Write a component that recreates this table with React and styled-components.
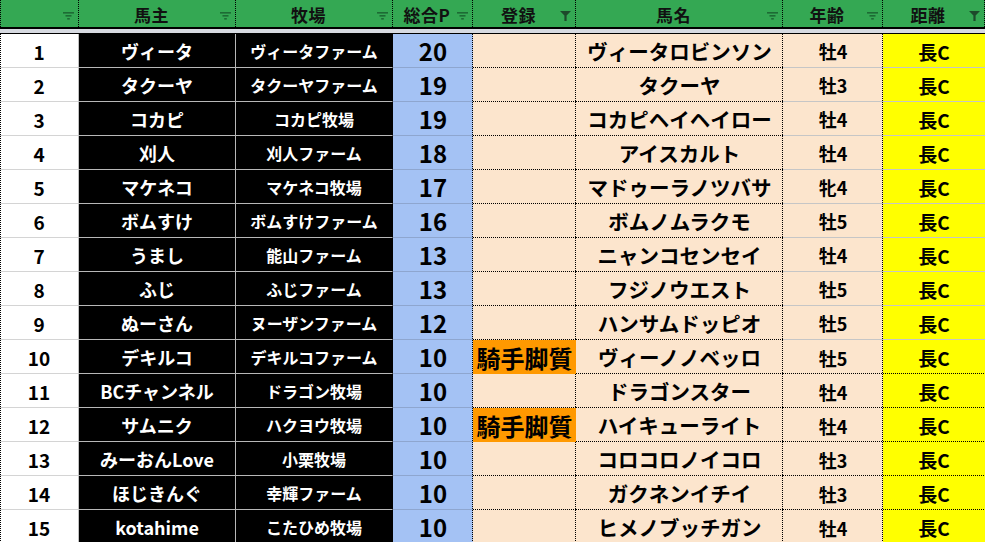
import React from 'react';
import styled, { createGlobalStyle } from 'styled-components';

const GlobalStyle = createGlobalStyle`
  html, body {
    margin: 0;
    padding: 0;
    background: #ffffff;
    overflow: hidden;
  }
  body {
    font-family: "Noto Sans CJK JP", "Noto Sans", sans-serif;
  }
`;

const COLS = '79px 157px 157px 80px 103px 207px 100px 102px';

// dotted hairlines drawn as background layers (1px on, 1px off)
const dotH = 'repeating-linear-gradient(90deg, #000 0 1px, transparent 1px 2px) left bottom / 100% 1px no-repeat';
const dotV = 'repeating-linear-gradient(180deg, #000 0 1px, transparent 1px 2px) right top / 1px 100% no-repeat';
const dotL = 'repeating-linear-gradient(180deg, #000 0 1px, transparent 1px 2px) left top / 1px 100% no-repeat';

const cellBackground = (p) => {
  const layers = [];
  if (p.$dotBottom) layers.push(dotH);
  if (p.$dotRight) layers.push(dotV);
  if (p.$dotLeft) layers.push(dotL);
  layers.push(p.$bg);
  return layers.join(', ');
};

const Sheet = styled.div`
  width: 985px;
  height: 542px;
  overflow: hidden;
  font-family: "Noto Sans CJK JP", "Noto Sans", sans-serif;
  font-weight: 700;
`;

const HeaderRow = styled.div`
  display: grid;
  grid-template-columns: ${COLS};
  height: 29px;
  background: #34a853;
  border-bottom: 2px solid #000;
  box-sizing: border-box;
`;

const HeaderCell = styled.div`
  display: flex;
  align-items: center;
  box-sizing: border-box;
  height: 27px;
  padding-right: 4px;
  color: #111;
  font-size: 17px;
  letter-spacing: 0.5px;
  background: ${(p) => cellBackground({ ...p, $dotRight: true, $bg: '#34a853' })};
`;

const HeaderLabel = styled.span`
  flex: 1;
  text-align: center;
  padding-left: 6px;
  line-height: 27px;
  padding-top: 1px;
`;

const IconBox = styled.span`
  width: 14px;
  display: flex;
  justify-content: center;
  align-items: center;
  margin-top: 5px;
`;

const Band = styled.div`
  height: 4px;
  background: #d7dae1;
  border-bottom: 1px solid #000;
`;

const Body = styled.div`
  display: grid;
  grid-template-columns: ${COLS};
  grid-auto-rows: 34px;
`;

const Cell = styled.div`
  box-sizing: border-box;
  display: flex;
  align-items: center;
  justify-content: center;
  background: ${cellBackground};
  color: ${(p) => p.$fg || '#000'};
  font-size: ${(p) => p.$size}px;
  border-right: ${(p) => p.$right || 'none'};
  border-bottom: ${(p) => p.$bottom || 'none'};
  white-space: nowrap;
  line-height: 1;
  padding-top: 1px;
`;

const FilterLines = () => (
  <svg width="11" height="8" viewBox="0 0 11 8">
    <rect x="0" y="0" width="11" height="1.6" fill="#1d6b34" />
    <rect x="2.5" y="3" width="6" height="1.6" fill="#1d6b34" />
    <rect x="4.2" y="6" width="2.6" height="1.6" fill="#1d6b34" />
  </svg>
);

const Funnel = () => (
  <svg width="11" height="10" viewBox="0 0 11 10">
    <path d="M0 0 H11 L6.6 4.6 V10 H4.4 V4.6 Z" fill="#1d4a2b" />
  </svg>
);

const headers = [
  { label: '', icon: 'lines' },
  { label: '馬主', icon: 'lines' },
  { label: '牧場', icon: 'lines' },
  { label: '総合P', icon: 'lines' },
  { label: '登録', icon: 'funnel' },
  { label: '馬名', icon: 'lines' },
  { label: '年齢', icon: 'lines' },
  { label: '距離', icon: 'funnel' },
];

const rows = [
  ['ヴィータ', 'ヴィータファーム', 20, '', 'ヴィータロビンソン', '牡4'],
  ['タクーヤ', 'タクーヤファーム', 19, '', 'タクーヤ', '牡3'],
  ['コカピ', 'コカピ牧場', 19, '', 'コカピヘイヘイロー', '牡4'],
  ['刈人', '刈人ファーム', 18, '', 'アイスカルト', '牡4'],
  ['マケネコ', 'マケネコ牧場', 17, '', 'マドゥーラノツバサ', '牝4'],
  ['ボムすけ', 'ボムすけファーム', 16, '', 'ボムノムラクモ', '牡5'],
  ['うまし', '能山ファーム', 13, '', 'ニャンコセンセイ', '牡4'],
  ['ふじ', 'ふじファーム', 13, '', 'フジノウエスト', '牡5'],
  ['ぬーさん', 'ヌーザンファーム', 12, '', 'ハンサムドッピオ', '牡5'],
  ['デキルコ', 'デキルコファーム', 10, '騎手脚質', 'ヴィーノノベッロ', '牡5'],
  ['BCチャンネル', 'ドラゴン牧場', 10, '', 'ドラゴンスター', '牡4'],
  ['サムニク', 'ハクヨウ牧場', 10, '騎手脚質', 'ハイキューライト', '牡4'],
  ['みーおんLove', '小栗牧場', 10, '', 'コロコロノイコロ', '牡3'],
  ['ほじきんぐ', '幸輝ファーム', 10, '', 'ガクネンイチイ', '牡3'],
  ['kotahime', 'こたひめ牧場', 10, '', 'ヒメノブッチガン', '牡4'],
];

const GRAY = '1px solid #b7b7b7';
const GRID = '1px solid #c6c6c6';
const PEACH = '#fce5cd';

export default function App() {
  return (
    <Sheet>
      <GlobalStyle />
      <HeaderRow>
        {headers.map((h, i) => (
          <HeaderCell key={i} $dotLeft={i === 0}>
            <HeaderLabel>{h.label}</HeaderLabel>
            <IconBox>{h.icon === 'funnel' ? <Funnel /> : <FilterLines />}</IconBox>
          </HeaderCell>
        ))}
      </HeaderRow>
      <Band />
      <Body>
        {rows.map((r, i) => {
          const reg = r[3] !== '';
          const lower = i >= 9;
          return (
            <React.Fragment key={i}>
              <Cell $bg="#fff" $size={19} $dotLeft $right="1px solid #c0c0c0" $bottom="1px solid #d4d4d4">
                {i + 1}
              </Cell>
              <Cell $bg="#000" $fg="#fff" $size={18} $right={GRAY} $bottom={GRAY}>
                {r[0]}
              </Cell>
              <Cell $bg="#000" $fg="#fff" $size={16} $right="1px solid #000" $bottom={GRAY}>
                {r[1]}
              </Cell>
              <Cell $bg="#a4c2f4" $size={24} $dotRight $bottom="1px solid #8ea6cf">
                {r[2]}
              </Cell>
              {reg ? (
                <Cell $bg="#ff9900" $size={24}>
                  {r[3]}
                </Cell>
              ) : (
                <Cell $bg={PEACH} $size={22} $dotRight $dotBottom />
              )}
              <Cell $bg={PEACH} $size={20.5} $dotRight $dotBottom>
                {r[4]}
              </Cell>
              <Cell $bg={PEACH} $size={18} $dotRight $dotBottom={lower} $bottom={lower ? null : GRID}>
                {r[5]}
              </Cell>
              <Cell $bg="#ffff00" $size={19} $dotBottom={lower} $bottom={lower ? null : GRID}>
                長C
              </Cell>
            </React.Fragment>
          );
        })}
      </Body>
    </Sheet>
  );
}
